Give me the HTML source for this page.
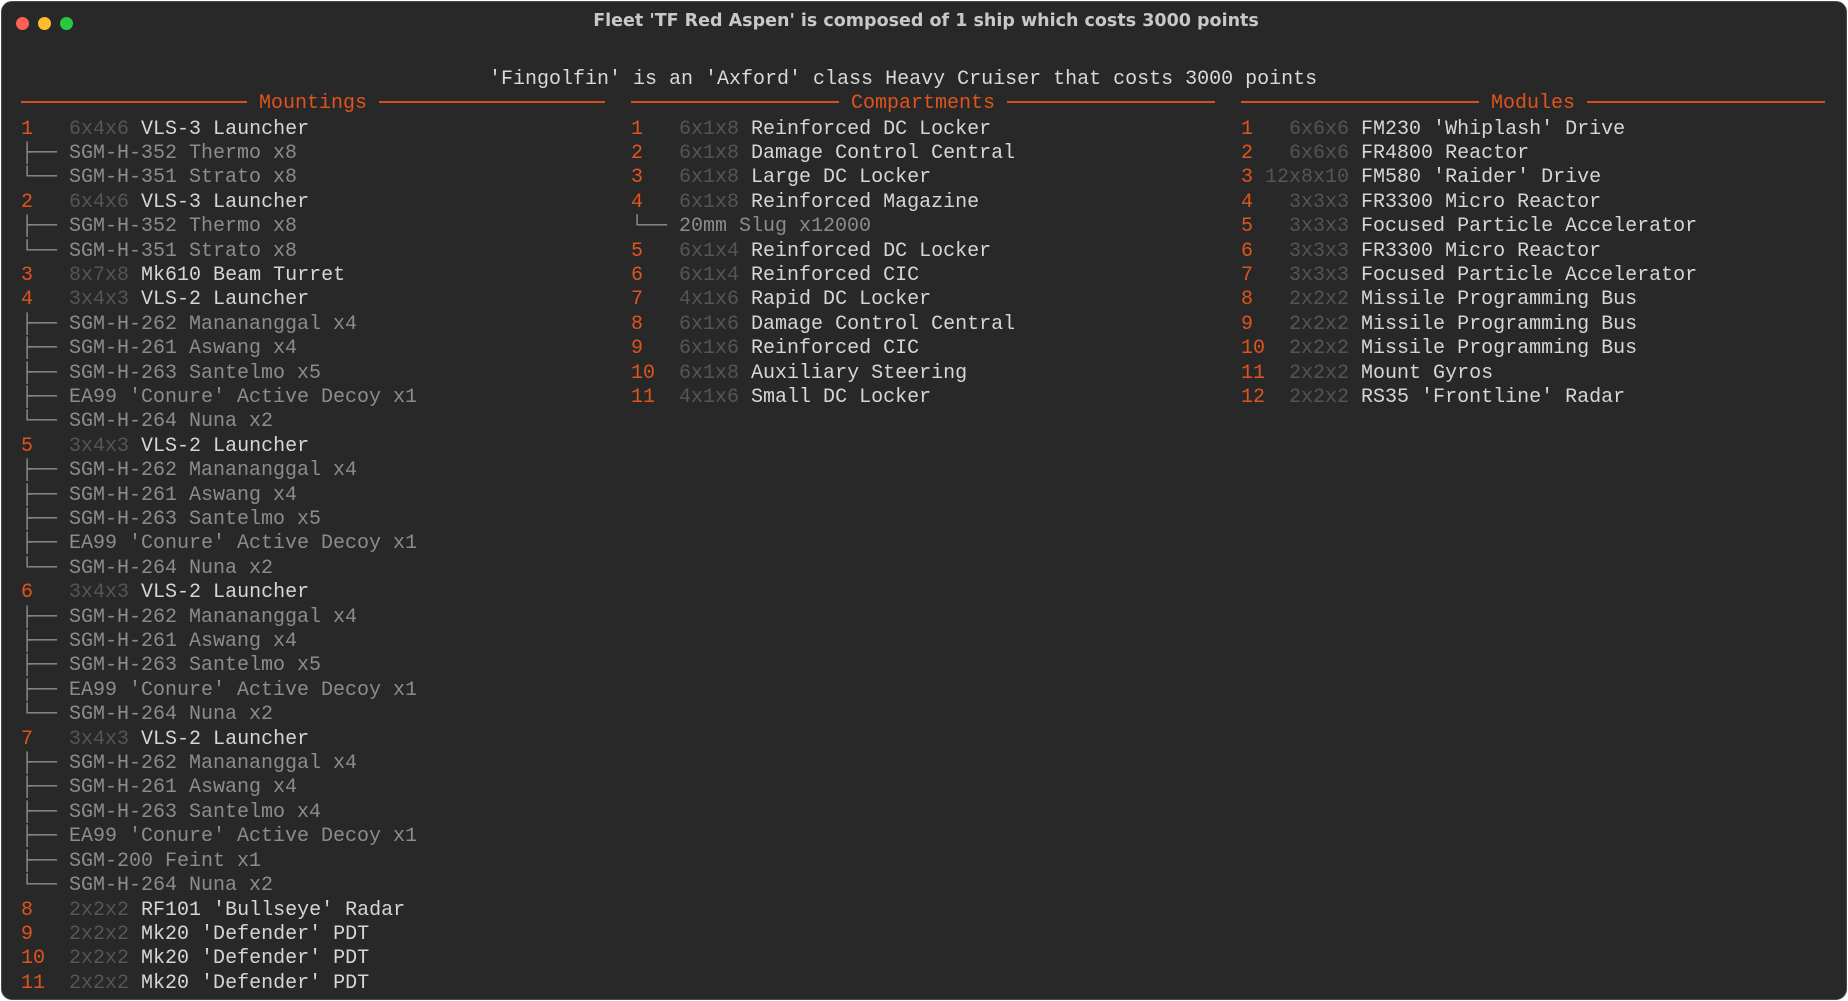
<!DOCTYPE html>
<html><head><meta charset="utf-8"><style>
html,body{margin:0;padding:0;background:#fff;width:1848px;height:1001px;overflow:hidden}
.win{position:absolute;left:1px;top:1px;width:1844px;height:997px;background:#282828;border:1px solid #4a4a4a;border-radius:11px;overflow:hidden}
.dot{position:absolute;top:15px;width:13px;height:13px;border-radius:50%}
.title{position:absolute;left:0;width:1848px;top:9px;text-align:center;font:bold 17.5px "DejaVu Sans","Liberation Sans",sans-serif;color:#c8c8c8}
pre{margin:0;position:absolute;font-family:"Liberation Mono","DejaVu Sans Mono",monospace;font-size:20px;line-height:24.4px;color:#d6d6d6}
.o{color:#e0541c}.d{color:#555}.g{color:#8c8c8c}.w{color:#d9d9d9}
.hdr{position:absolute;top:91px;height:24.4px;display:flex;align-items:center;font-family:"Liberation Mono","DejaVu Sans Mono",monospace;font-size:20px;color:#e0541c;width:584px}
.hdr i{flex:1;height:2px;background:#d4501c;margin-top:-3px}
.hdr span{padding:0 12px}
</style></head><body>
<div class="win">
<div class="dot" style="left:14px;background:#fe5f57"></div>
<div class="dot" style="left:36px;background:#febc2e"></div>
<div class="dot" style="left:58px;background:#28c840"></div>
<div class="title">Fleet 'TF Red Aspen' is composed of 1 ship which costs 3000 points</div>
</div>
<pre style="left:489px;top:68px" class="w">'Fingolfin' is an 'Axford' class Heavy Cruiser that costs 3000 points</pre>
<div class="hdr" style="left:21px"><i></i><span>Mountings</span><i></i></div>
<div class="hdr" style="left:631px"><i></i><span>Compartments</span><i></i></div>
<div class="hdr" style="left:1241px"><i></i><span>Modules</span><i></i></div>
<pre style="left:21px;top:117.5px"><span class="o">1</span>   <span class="d">6x4x6</span> VLS-3 Launcher
<span class="g">├── SGM-H-352 Thermo x8
└── SGM-H-351 Strato x8</span>
<span class="o">2</span>   <span class="d">6x4x6</span> VLS-3 Launcher
<span class="g">├── SGM-H-352 Thermo x8
└── SGM-H-351 Strato x8</span>
<span class="o">3</span>   <span class="d">8x7x8</span> Mk610 Beam Turret
<span class="o">4</span>   <span class="d">3x4x3</span> VLS-2 Launcher
<span class="g">├── SGM-H-262 Manananggal x4
├── SGM-H-261 Aswang x4
├── SGM-H-263 Santelmo x5
├── EA99 'Conure' Active Decoy x1
└── SGM-H-264 Nuna x2</span>
<span class="o">5</span>   <span class="d">3x4x3</span> VLS-2 Launcher
<span class="g">├── SGM-H-262 Manananggal x4
├── SGM-H-261 Aswang x4
├── SGM-H-263 Santelmo x5
├── EA99 'Conure' Active Decoy x1
└── SGM-H-264 Nuna x2</span>
<span class="o">6</span>   <span class="d">3x4x3</span> VLS-2 Launcher
<span class="g">├── SGM-H-262 Manananggal x4
├── SGM-H-261 Aswang x4
├── SGM-H-263 Santelmo x5
├── EA99 'Conure' Active Decoy x1
└── SGM-H-264 Nuna x2</span>
<span class="o">7</span>   <span class="d">3x4x3</span> VLS-2 Launcher
<span class="g">├── SGM-H-262 Manananggal x4
├── SGM-H-261 Aswang x4
├── SGM-H-263 Santelmo x4
├── EA99 'Conure' Active Decoy x1
├── SGM-200 Feint x1
└── SGM-H-264 Nuna x2</span>
<span class="o">8</span>   <span class="d">2x2x2</span> RF101 'Bullseye' Radar
<span class="o">9</span>   <span class="d">2x2x2</span> Mk20 'Defender' PDT
<span class="o">10</span>  <span class="d">2x2x2</span> Mk20 'Defender' PDT
<span class="o">11</span>  <span class="d">2x2x2</span> Mk20 'Defender' PDT</pre>
<pre style="left:631px;top:117.5px"><span class="o">1</span>   <span class="d">6x1x8</span> Reinforced DC Locker
<span class="o">2</span>   <span class="d">6x1x8</span> Damage Control Central
<span class="o">3</span>   <span class="d">6x1x8</span> Large DC Locker
<span class="o">4</span>   <span class="d">6x1x8</span> Reinforced Magazine
<span class="g">└── 20mm Slug x12000</span>
<span class="o">5</span>   <span class="d">6x1x4</span> Reinforced DC Locker
<span class="o">6</span>   <span class="d">6x1x4</span> Reinforced CIC
<span class="o">7</span>   <span class="d">4x1x6</span> Rapid DC Locker
<span class="o">8</span>   <span class="d">6x1x6</span> Damage Control Central
<span class="o">9</span>   <span class="d">6x1x6</span> Reinforced CIC
<span class="o">10</span>  <span class="d">6x1x8</span> Auxiliary Steering
<span class="o">11</span>  <span class="d">4x1x6</span> Small DC Locker</pre>
<pre style="left:1241px;top:117.5px"><span class="o">1</span>   <span class="d">6x6x6</span> FM230 'Whiplash' Drive
<span class="o">2</span>   <span class="d">6x6x6</span> FR4800 Reactor
<span class="o">3</span> <span class="d">12x8x10</span> FM580 'Raider' Drive
<span class="o">4</span>   <span class="d">3x3x3</span> FR3300 Micro Reactor
<span class="o">5</span>   <span class="d">3x3x3</span> Focused Particle Accelerator
<span class="o">6</span>   <span class="d">3x3x3</span> FR3300 Micro Reactor
<span class="o">7</span>   <span class="d">3x3x3</span> Focused Particle Accelerator
<span class="o">8</span>   <span class="d">2x2x2</span> Missile Programming Bus
<span class="o">9</span>   <span class="d">2x2x2</span> Missile Programming Bus
<span class="o">10</span>  <span class="d">2x2x2</span> Missile Programming Bus
<span class="o">11</span>  <span class="d">2x2x2</span> Mount Gyros
<span class="o">12</span>  <span class="d">2x2x2</span> RS35 'Frontline' Radar</pre>
</body></html>
